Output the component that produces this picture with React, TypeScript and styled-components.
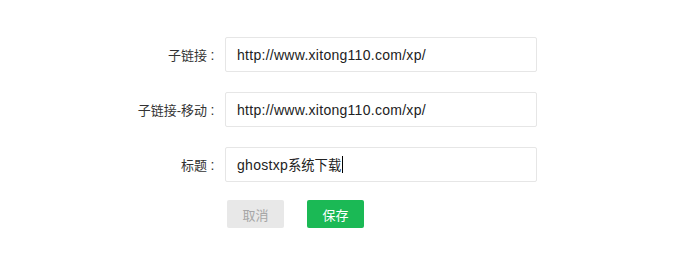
import React from "react";
import styled, { createGlobalStyle } from "styled-components";

const Global = createGlobalStyle`
  html, body { margin: 0; padding: 0; background: #fff; }
  body { font-family: "Liberation Sans", "Noto Sans CJK SC", sans-serif; color: #333; }
`;

const Form = styled.div`
  display: grid;
  grid-template-columns: 218px 312px;
  column-gap: 7px;
  row-gap: 20px;
  padding-top: 37px;
  align-items: center;
`;

const Label = styled.div`
  display: flex;
  justify-content: flex-end;
  align-items: center;
  font-size: 13px;
  color: #333;
`;

const Colon = styled.span`
  display: inline-block;
  width: 11px;
  text-align: center;
  font-size: 14px;
`;

const Field = styled.div`
  box-sizing: border-box;
  height: 35px;
  border: 1px solid #e6e6e6;
  border-radius: 2px;
  padding: 0 11px;
  display: flex;
  align-items: center;
  font-size: 14px;
  color: #222;
  white-space: nowrap;
`;

const Latin = styled.span`
  letter-spacing: 0.28px;
`;

const Cjk = styled.span`
  font-size: 13.3px;
`;

const Caret = styled.span`
  display: inline-block;
  width: 1px;
  height: 17px;
  background: #000;
  margin-left: 1px;
`;

const Actions = styled.div`
  grid-column: 2;
  display: flex;
  gap: 23px;
  padding-left: 2px;
  margin-top: -2px;
`;

const Button = styled.button<{ $primary?: boolean }>`
  width: 57px;
  height: 28px;
  border: none;
  border-radius: 2px;
  font-family: "Noto Sans CJK SC", sans-serif;
  font-size: 13px;
  background: ${(p) => (p.$primary ? "#1bb955" : "#e8e8e8")};
  color: ${(p) => (p.$primary ? "#fff" : "#a6a6a6")};
  padding: 0;
  cursor: pointer;
`;

const rows = [
  { label: "子链接", value: "http://www.xitong110.com/xp/" },
  { label: "子链接-移动", value: "http://www.xitong110.com/xp/" },
];

export default function App() {
  return (
    <>
      <Global />
      <Form>
        {rows.map((r, i) => (
          <React.Fragment key={i}>
            <Label>
              {r.label}
              <Colon>:</Colon>
            </Label>
            <Field>
              <Latin>{r.value}</Latin>
            </Field>
          </React.Fragment>
        ))}
        <Label>
          标题
          <Colon>:</Colon>
        </Label>
        <Field>
          <Latin>ghostxp</Latin>
          <Cjk>系统下载</Cjk>
          <Caret />
        </Field>
        <Actions>
          <Button>取消</Button>
          <Button $primary>保存</Button>
        </Actions>
      </Form>
    </>
  );
}
